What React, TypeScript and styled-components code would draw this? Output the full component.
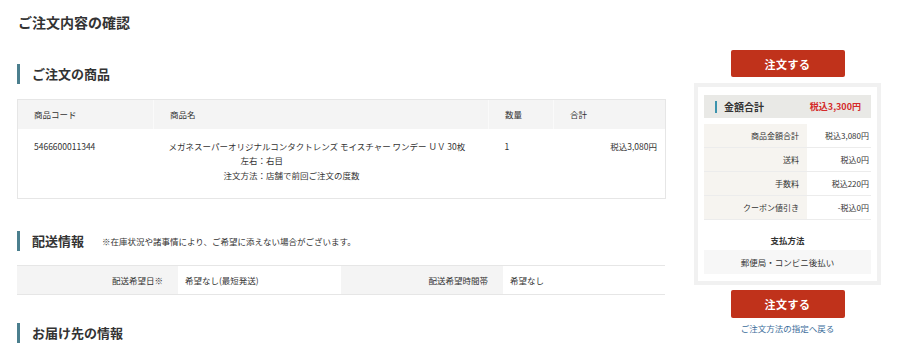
import React from 'react';
import styled, { createGlobalStyle } from 'styled-components';

const colors = {
  text: '#333333',
  line: '#e6e6e6',
  headBg: '#f4f4f4',
  accent: '#4b7f8e',
  red: '#c0321b',
  price: '#d42a2a',
  link: '#3a6d9a',
};

const GlobalStyle = createGlobalStyle`
  html, body {
    margin: 0;
    padding: 0;
    background: #ffffff;
  }
  body {
    font-family: "Noto Sans CJK JP", "Noto Sans", sans-serif;
    color: ${colors.text};
    overflow: hidden;
  }
`;

const Page = styled.div`
  display: flex;
  align-items: flex-start;
  padding: 0 19px 0 17px;
  width: 900px;
  height: 350px;
  box-sizing: border-box;
  overflow: hidden;
`;

const Main = styled.main`
  width: 648px;
  flex-shrink: 0;
`;

const Title = styled.h1`
  margin: 12px 0 0 1px;
  font-size: 14px;
  line-height: 20px;
  font-weight: 700;
`;

const SectionHead = styled.div<{ gap: number }>`
  display: flex;
  align-items: center;
  margin-top: ${p => p.gap}px;
  height: 20px;
  border-left: 3px solid ${colors.accent};
  padding-left: 12px;
`;

const SectionTitle = styled.h2`
  margin: 0;
  font-size: 13px;
  font-weight: 700;
  line-height: 20px;
`;

const Note = styled.span`
  margin-left: 18px;
  font-size: 8.5px;
`;

const Table = styled.table`
  width: 648px;
  border-collapse: collapse;
  table-layout: fixed;
  font-size: 8.5px;
  margin-top: 15px;
`;

const HeadCell = styled.th<{ w: number }>`
  box-sizing: border-box;
  width: ${p => p.w}px;
  height: 29px;
  padding: 0 0 0 16px;
  text-align: left;
  font-weight: 400;
  background: ${colors.headBg};
  border-top: 1px solid ${colors.line};
  border-left: 1px solid #fafafa;
  &:first-child { border-left: 1px solid ${colors.line}; }
  &:last-child { border-right: 1px solid ${colors.line}; }
`;

const BodyRow = styled.tr`
  border: 1px solid ${colors.line};
  border-top: none;
`;

const Cell = styled.td<{ right?: boolean }>`
  box-sizing: border-box;
  height: 70px;
  vertical-align: top;
  padding: 10px ${p => (p.right ? '8px' : '0')} 0 16px;
  line-height: 14.5px;
  text-align: ${p => (p.right ? 'right' : 'left')};
`;

const NameCell = styled(Cell)`
  padding-left: 15px;
`;

const NameLine = styled.div<{ indent: number }>`
  padding-left: ${p => p.indent}px;
  white-space: nowrap;
`;

const DeliveryTable = styled.div`
  display: grid;
  grid-template-columns: 161px 163px 162px 162px;
  margin-top: 14px;
  border-top: 1px solid ${colors.line};
  border-bottom: 1px solid ${colors.line};
  font-size: 8.5px;
`;

const DLabel = styled.div`
  height: 28px;
  display: flex;
  align-items: center;
  justify-content: flex-end;
  padding-right: 15px;
  background: ${colors.headBg};
`;

const DValue = styled.div`
  height: 28px;
  display: flex;
  align-items: center;
  padding-left: 7px;
`;

const Side = styled.aside`
  width: 187px;
  margin-left: 29px;
  padding-top: 50px;
  display: flex;
  flex-direction: column;
  align-items: center;
`;

const OrderButton = styled.button<{ h: number }>`
  width: 114px;
  height: ${p => p.h}px;
  border: none;
  border-radius: 2px;
  background: ${colors.red};
  color: #ffffff;
  font-family: inherit;
  font-size: 11px;
  font-weight: 700;
  letter-spacing: 0.5px;
  cursor: pointer;
`;

const SummaryBox = styled.div`
  width: 100%;
  box-sizing: border-box;
  margin: 6px 0 5px;
  border: 4px solid #f1f1f1;
  padding: 8px 6px 7px;
`;

const SummaryHead = styled.div`
  display: flex;
  align-items: center;
  justify-content: space-between;
  height: 23px;
  background: #e9e9e6;
  padding: 0 10px 0 11px;
`;

const SummaryTitle = styled.span`
  border-left: 2px solid #3b93ad;
  padding-left: 7px;
  font-size: 10px;
  font-weight: 700;
  line-height: 12px;
`;

const TotalPrice = styled.span`
  color: ${colors.price};
  font-size: 9px;
  font-weight: 700;
`;

const Rows = styled.div`
  margin-top: 6px;
  display: grid;
  grid-template-columns: 103px 1fr;
  font-size: 8px;
`;

const RowLabel = styled.div`
  height: 23px;
  display: flex;
  align-items: center;
  justify-content: flex-end;
  padding-right: 8px;
  background: #f6f4f0;
  border-bottom: 1px solid #ececec;
`;

const RowValue = styled.div`
  height: 23px;
  display: flex;
  align-items: center;
  justify-content: flex-end;
  padding-right: 2px;
  border-bottom: 1px solid #ececec;
`;

const PayTitle = styled.div`
  margin-top: 13px;
  text-align: center;
  font-size: 8.5px;
  font-weight: 700;
  line-height: 14px;
`;

const PayBox = styled.div`
  margin-top: 3px;
  height: 24px;
  display: flex;
  align-items: center;
  justify-content: center;
  background: #f7f7f7;
  font-size: 8.5px;
`;

const BackLink = styled.a`
  margin-top: 4px;
  font-size: 8.5px;
  color: ${colors.link};
  text-decoration: none;
`;

const amounts = [
  { label: '商品金額合計', value: '税込3,080円' },
  { label: '送料', value: '税込0円' },
  { label: '手数料', value: '税込220円' },
  { label: 'クーポン値引き', value: '-税込0円' },
];

const App = () => (
  <>
    <GlobalStyle />
    <Page>
      <Main>
        <Title>ご注文内容の確認</Title>

        <SectionHead gap={32}>
          <SectionTitle>ご注文の商品</SectionTitle>
        </SectionHead>
        <Table>
          <thead>
            <tr>
              <HeadCell w={136}>商品コード</HeadCell>
              <HeadCell w={335}>商品名</HeadCell>
              <HeadCell w={65}>数量</HeadCell>
              <HeadCell w={112}>合計</HeadCell>
            </tr>
          </thead>
          <tbody>
            <BodyRow>
              <Cell>5466600011344</Cell>
              <NameCell>
                <NameLine indent={0}>メガネスーパーオリジナルコンタクトレンズ モイスチャー ワンデー ＵＶ 30枚</NameLine>
                <NameLine indent={72}>左右：右目</NameLine>
                <NameLine indent={55}>注文方法：店舗で前回ご注文の度数</NameLine>
              </NameCell>
              <Cell>1</Cell>
              <Cell right>税込3,080円</Cell>
            </BodyRow>
          </tbody>
        </Table>

        <SectionHead gap={32}>
          <SectionTitle>配送情報</SectionTitle>
          <Note>※在庫状況や諸事情により、ご希望に添えない場合がございます。</Note>
        </SectionHead>
        <DeliveryTable>
          <DLabel>配送希望日※</DLabel>
          <DValue>希望なし(最短発送)</DValue>
          <DLabel>配送希望時間帯</DLabel>
          <DValue>希望なし</DValue>
        </DeliveryTable>

        <SectionHead gap={28}>
          <SectionTitle>お届け先の情報</SectionTitle>
        </SectionHead>
      </Main>

      <Side>
        <OrderButton h={27}>注文する</OrderButton>
        <SummaryBox>
          <SummaryHead>
            <SummaryTitle>金額合計</SummaryTitle>
            <TotalPrice>税込3,300円</TotalPrice>
          </SummaryHead>
          <Rows>
            {amounts.map(({ label, value }) => (
              <React.Fragment key={label}>
                <RowLabel>{label}</RowLabel>
                <RowValue>{value}</RowValue>
              </React.Fragment>
            ))}
          </Rows>
          <PayTitle>支払方法</PayTitle>
          <PayBox>郵便局・コンビニ後払い</PayBox>
        </SummaryBox>
        <OrderButton h={28}>注文する</OrderButton>
        <BackLink href="#">ご注文方法の指定へ戻る</BackLink>
      </Side>
    </Page>
  </>
);

export default App;
